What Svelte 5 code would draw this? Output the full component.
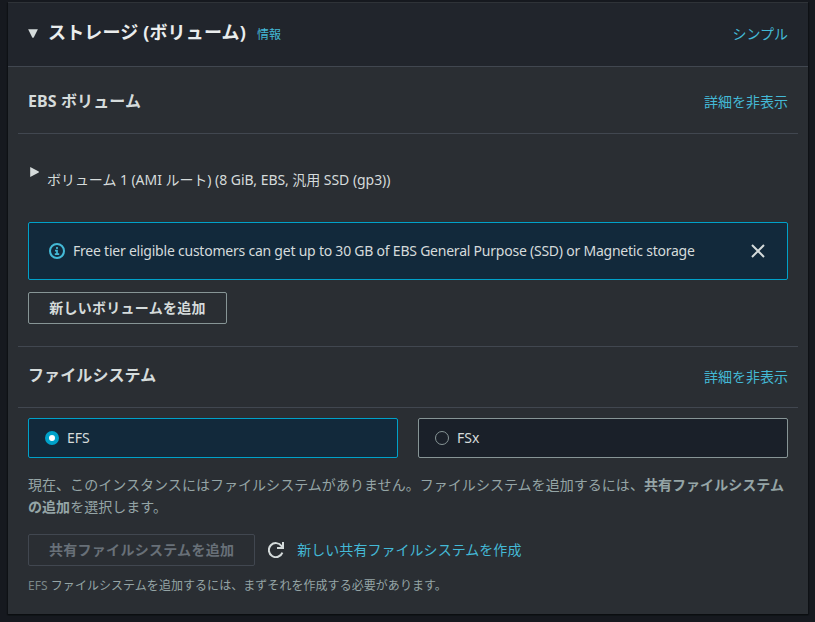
<script lang="ts">
  let fileSystem = $state('EFS');
  let showAlert = $state(true);

  const fileSystems = ['EFS', 'FSx'];
</script>

<main class="panel">
  <header class="panel-header">
    <svg class="caret" viewBox="0 0 10 9"><path d="M0.1 0.2h9.8L5.6 8.8h-1.2z" /></svg>
    <h2>ストレージ (ボリューム)</h2>
    <a class="info" href="#info">情報</a>
    <a class="action" href="#simple">シンプル</a>
  </header>

  <section class="volumes">
    <div class="section-header">
      <h3>EBS ボリューム</h3>
      <a class="action" href="#ebs">詳細を非表示</a>
    </div>
    <div class="volume-row">
      <svg class="arrow" viewBox="0 0 9 10"><path d="M0.2 0v10L8.8 5.5v-1z" /></svg>
      <span class="volume-label">ボリューム 1 (AMI ルート) (8 GiB, EBS, 汎用 SSD (gp3))</span>
    </div>
    {#if showAlert}
      <div class="alert">
        <svg class="info-icon" viewBox="0 0 16 16">
          <circle cx="8" cy="8" r="7" />
          <path d="M8 4v2M6 7.7h2v3.4M5.8 11.2h4.4" />
        </svg>
        <span class="alert-text">Free tier eligible customers can get up to 30 GB of EBS General Purpose (SSD) or Magnetic storage</span>
        <button class="close" aria-label="閉じる" onclick={() => (showAlert = false)}>
          <svg viewBox="0 0 14 14"><path d="M1 1l12 12M13 1L1 13" /></svg>
        </button>
      </div>
    {/if}
    <button class="btn">新しいボリュームを追加</button>
  </section>

  <section class="files">
    <div class="section-header">
      <h3>ファイルシステム</h3>
      <a class="action" href="#fs">詳細を非表示</a>
    </div>
    <div class="tiles">
      {#each fileSystems as name}
        <button class="tile" class:selected={fileSystem === name} onclick={() => (fileSystem = name)}>
          <span class="radio"></span>
          <span class="tile-label">{name}</span>
        </button>
      {/each}
    </div>
    <p class="description">現在、このインスタンスにはファイルシステムがありません。ファイルシステムを追加するには、<b>共有ファイルシステムの追加</b>を選択します。</p>
    <div class="actions">
      <button class="btn" disabled>共有ファイルシステムを追加</button>
      <svg class="refresh" viewBox="0 0 16 16">
        <path d="M14.4 10.6A7 7 0 1 1 13.6 4.1L14.6 5.3" />
        <path d="M15 0v6H9" />
      </svg>
      <a href="#create">新しい共有ファイルシステムを作成</a>
    </div>
    <p class="hint"><span class="service">EFS</span> ファイルシステムを追加するには、まずそれを作成する必要があります。</p>
  </section>
</main>

<style>
  :global(body) {
    margin: 0;
    background: #16191f;
  }

  .panel {
    box-sizing: border-box;
    width: 800px;
    height: 612px;
    margin: 2px 0 8px 8px;
    border-top: 1px solid #2f3338;
    background: #2a2e33;
    color: #d5dbdb;
    font: 14px/22px 'Noto Sans', 'Noto Sans CJK JP', sans-serif;
    box-shadow: 0 1px 1px 0 #0b0d10, 1px 1px 1px 0 #101317, -1px 1px 1px 0 #101317;
  }

  a {
    color: #44b9d6;
    text-decoration: none;
  }

  h2,
  h3,
  p {
    margin: 0;
  }

  .panel-header {
    display: flex;
    align-items: center;
    height: 63px;
    padding: 0 20px;
    border-bottom: 1px solid #414750;
    background: #21252c;
  }

  .caret {
    width: 10px;
    height: 9px;
    margin: -2px 10px 0 0;
    fill: #d5dbdb;
  }

  h2 {
    color: #eaeded;
    font-size: 18px;
    line-height: 22px;
    letter-spacing: 0.15px;
    white-space: nowrap;
    margin-top: -5px;
  }

  .info {
    margin-left: 11px;
    font-size: 12px;
  }

  .action {
    margin-left: auto;
  }

  .panel-header .action {
    margin-top: -2px;
  }

  section {
    padding: 0 10px;
  }

  .section-header {
    display: flex;
    align-items: center;
    border-bottom: 1px solid #414750;
  }

  .volumes .section-header {
    height: 62px;
    padding: 4px 10px 0;
  }

  .files .section-header {
    height: 60px;
    padding: 0 10px;
    border-top: 1px solid #414750;
  }

  h3 {
    font-size: 16px;
    line-height: 20px;
    letter-spacing: 0.1px;
    margin-top: -2px;
  }

  .files h3 {
    margin-top: -4px;
  }

  .volume-row {
    display: flex;
    height: 55px;
    padding: 33px 10px 0;
  }

  .arrow {
    width: 9px;
    height: 10px;
    margin: 0 8px 0 2px;
    fill: #d5dbdb;
  }

  .volume-label {
    margin-top: 2px;
    letter-spacing: -0.05px;
    white-space: nowrap;
  }

  .alert {
    display: flex;
    align-items: center;
    box-sizing: border-box;
    height: 58px;
    margin: 0 10px 12px;
    padding: 0 20px;
    border: 1px solid #00a1c9;
    border-radius: 2px;
    background: #12293b;
  }

  .info-icon {
    width: 16px;
    height: 16px;
    margin-right: 8px;
    fill: none;
    stroke: #44b9d6;
    stroke-width: 2;
  }

  .info-icon path {
    stroke-width: 1.7;
  }

  .alert-text {
    letter-spacing: -0.227px;
    white-space: nowrap;
  }

  .close {
    display: flex;
    margin-left: auto;
    padding: 0 2px;
    border: 0;
    background: none;
  }

  .close svg {
    width: 14px;
    height: 14px;
    stroke: #d5dbdb;
    stroke-width: 2;
  }

  .btn {
    display: block;
    box-sizing: border-box;
    height: 32px;
    padding: 0 20px 2px;
    border: 1px solid #879596;
    border-radius: 2px;
    background: none;
    color: #d5dbdb;
    font: bold 14px/20px 'Noto Sans CJK JP', sans-serif;
    letter-spacing: 0.28px;
    white-space: nowrap;
  }

  .volumes .btn {
    min-width: 199px;
    margin: 0 10px 22px;
  }

  .btn:disabled {
    border-color: #414750;
    color: #687078;
  }

  .tiles {
    display: grid;
    grid-template-columns: 1fr 1fr;
    gap: 20px;
    padding: 10px 10px 16px;
  }

  .tile {
    display: flex;
    align-items: center;
    box-sizing: border-box;
    height: 40px;
    padding: 0 16px;
    border: 1px solid #879596;
    border-radius: 2px;
    background: #1a2029;
    color: #d5dbdb;
    font: inherit;
  }

  .tile.selected {
    border-color: #00a1c9;
    background: #12293b;
  }

  .radio {
    box-sizing: border-box;
    width: 14px;
    height: 14px;
    margin-right: 8px;
    border: 1px solid #879596;
    border-radius: 50%;
  }

  .selected .radio {
    border: 4px solid #00a1c9;
    background: #fff;
  }

  .description {
    padding: 0 10px;
    color: #95a5a6;
    letter-spacing: 0.04px;
  }

  .actions {
    display: flex;
    align-items: center;
    padding: 16px 10px 9px;
  }

  .actions a {
    letter-spacing: 0.04px;
  }

  .refresh {
    width: 16px;
    height: 16px;
    margin: 0 13px;
    fill: none;
    stroke: #d5dbdb;
    stroke-width: 2;
  }

  .hint {
    padding: 0 10px;
    color: #95a5a6;
    font-size: 12px;
    letter-spacing: 0.05px;
  }

  .service {
    color: #7a8788;
  }
</style>
